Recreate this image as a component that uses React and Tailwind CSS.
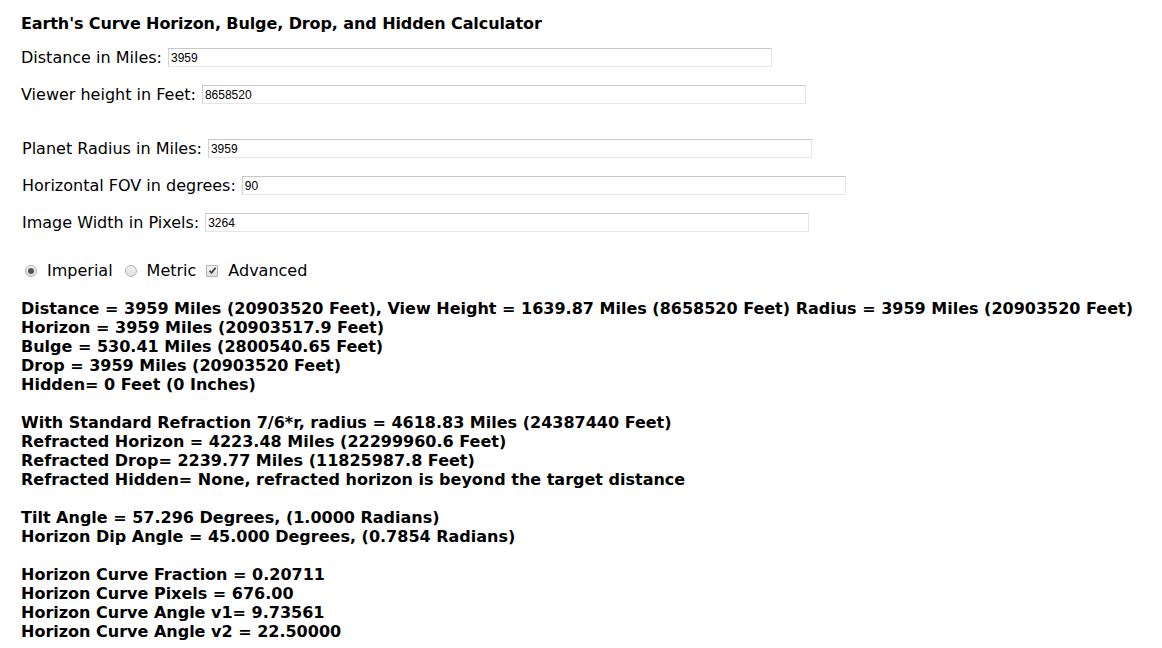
import React from "react";

const fields = [
  { label: "Distance in Miles:", value: "3959", mt: "mt-[14px]", pad: "" },
  { label: "Viewer height in Feet:", value: "8658520", mt: "mt-[18px]", pad: "" },
  { label: "Planet Radius in Miles:", value: "3959", mt: "mt-[35px]", pad: "pl-[1px]" },
  { label: "Horizontal FOV in degrees:", value: "90", mt: "mt-[18px]", pad: "pl-[1px]" },
  { label: "Image Width in Pixels:", value: "3264", mt: "mt-[18px]", pad: "pl-[1px]" },
];

const results = [
  "Distance = 3959 Miles (20903520 Feet), View Height = 1639.87 Miles (8658520 Feet) Radius = 3959 Miles (20903520 Feet)",
  "Horizon = 3959 Miles (20903517.9 Feet)",
  "Bulge = 530.41 Miles (2800540.65 Feet)",
  "Drop = 3959 Miles (20903520 Feet)",
  "Hidden= 0 Feet (0 Inches)",
  "",
  "With Standard Refraction 7/6*r, radius = 4618.83 Miles (24387440 Feet)",
  "Refracted Horizon = 4223.48 Miles (22299960.6 Feet)",
  "Refracted Drop= 2239.77 Miles (11825987.8 Feet)",
  "Refracted Hidden= None, refracted horizon is beyond the target distance",
  "",
  "Tilt Angle = 57.296 Degrees, (1.0000 Radians)",
  "Horizon Dip Angle = 45.000 Degrees, (0.7854 Radians)",
  "",
  "Horizon Curve Fraction = 0.20711",
  "Horizon Curve Pixels = 676.00",
  "Horizon Curve Angle v1= 9.73561",
  "Horizon Curve Angle v2 = 22.50000",
];

const Radio = ({ checked }) => (
  <span className="inline-flex w-[12px] h-[12px] rounded-full border border-[#b4b4b4] bg-gradient-to-b from-[#f4f4f4] to-[#dedede] items-center justify-center">
    {checked && <span className="w-[6px] h-[6px] rounded-full bg-[#555]" />}
  </span>
);

const Checkbox = () => (
  <span className="inline-flex w-[12px] h-[12px] border border-[#b4b4b4] bg-gradient-to-b from-[#f4f4f4] to-[#dedede] items-center justify-center">
    <svg width="9" height="9" viewBox="0 0 9 9">
      <path d="M1.5 4.8 L3.5 6.8 L7.6 1.8" fill="none" stroke="#333" strokeWidth="1.6" />
    </svg>
  </span>
);

export default function App() {
  return (
    <div className="min-h-screen bg-white text-black pl-[21px] pt-[14px] font-['DejaVu_Sans',Verdana,sans-serif]">
      <h1 className="h-[20px] leading-[20px] text-[16px] font-bold tracking-[-0.1px]">
        Earth's Curve Horizon, Bulge, Drop, and Hidden Calculator
      </h1>

      {fields.map((f) => (
        <div key={f.label} className={`${f.mt} ${f.pad} flex items-center h-[19px] text-[16px]`}>
          <span>{f.label}</span>
          <input
            readOnly
            value={f.value}
            className="ml-[6px] w-[604px] h-[19px] border border-[#e6e6e6] border-t-[#c8c8c8] border-l-[#d2d2d2] px-[2px] text-[12px] font-['Liberation_Sans',Arial,sans-serif] text-black outline-none"
          />
        </div>
      ))}

      <div className="mt-[29px] flex items-center h-[19px] text-[16px]">
        <span className="ml-[4px] mr-[10px] flex"><Radio checked /></span>
        <span>Imperial</span>
        <span className="ml-[12px] mr-[10px] flex"><Radio /></span>
        <span>Metric</span>
        <span className="ml-[10px] mr-[10px] flex"><Checkbox /></span>
        <span>Advanced</span>
      </div>

      <div className="mt-[19px] text-[16px] font-bold leading-[19px] whitespace-nowrap">
        {results.map((r, i) => (
          <div key={i} className="h-[19px]">{r}</div>
        ))}
      </div>
    </div>
  );
}
